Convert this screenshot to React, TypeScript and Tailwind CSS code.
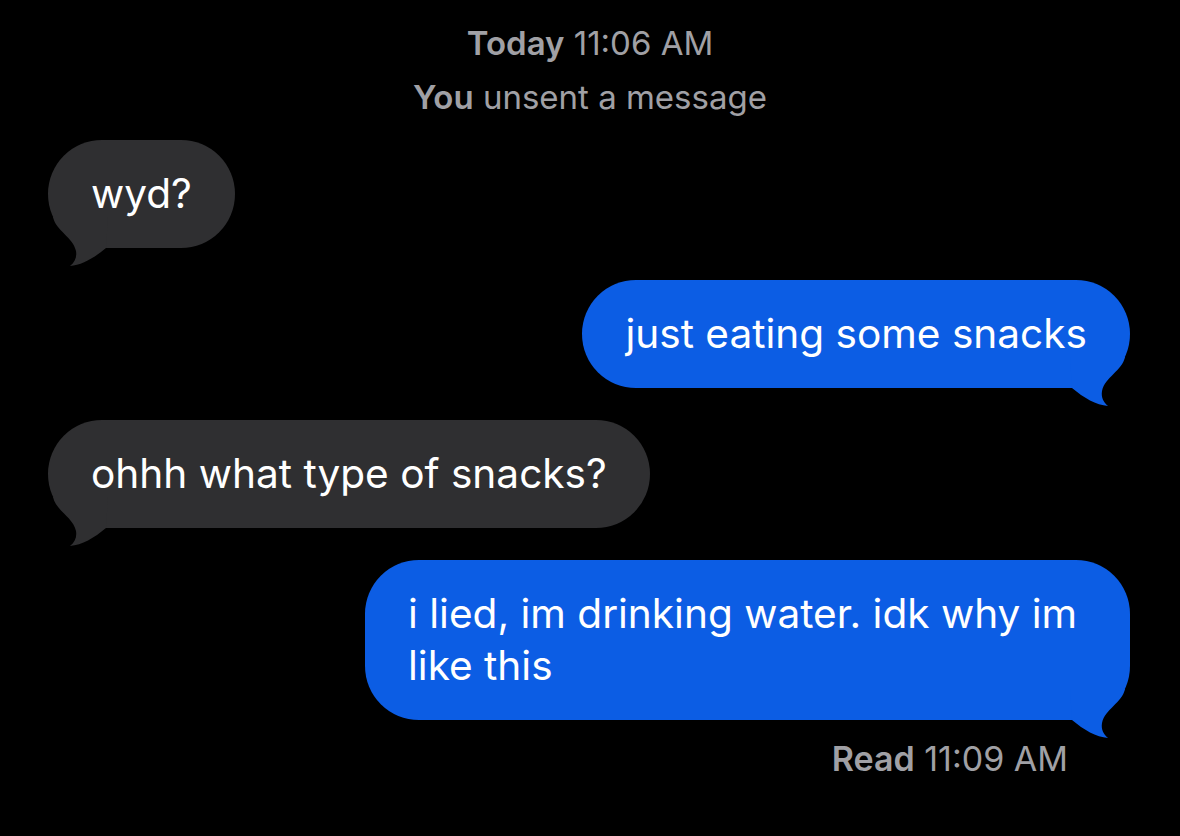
import React from 'react';

type Msg = { from: 'them' | 'me'; text: string };

const messages: Msg[] = [
  { from: 'them', text: 'wyd?' },
  { from: 'me', text: 'just eating some snacks' },
  { from: 'them', text: 'ohhh what type of snacks?' },
  { from: 'me', text: 'i lied, im drinking water. idk why im like this' },
];

function Tail({ side, color }: { side: 'left' | 'right'; color: string }) {
  const pos = side === 'left' ? 'left-0' : 'right-0 -scale-x-100';
  return (
    <svg
      className={`absolute ${pos} bottom-[-19px] w-[60px] h-[50px]`}
      viewBox="0 0 60 50"
      fill={color}
    >
      <path d="M5 0 C8 14 25 20 28 34 C29 40 27 45 22 49 C34 48 46 41 58 31 L60 0 Z" />
    </svg>
  );
}

function Bubble({ msg }: { msg: Msg }) {
  const mine = msg.from === 'me';
  const color = mine ? '#0c5de4' : '#2f2f31';
  return (
    <div className={`flex ${mine ? 'justify-end pr-[50px]' : 'justify-start pl-[48px]'}`}>
      <div
        className={`relative max-w-[765px] rounded-[54px] px-[43px] py-[28px] text-[40.6px] leading-[52px] text-white ${
          mine ? 'bg-[#0c5de4]' : 'bg-[#2f2f31]'
        }`}
      >
        <Tail side={mine ? 'right' : 'left'} color={color} />
        <span className="relative">{msg.text}</span>
      </div>
    </div>
  );
}

export default function App() {
  return (
    <div
      className="w-[1180px] h-[836px] bg-black overflow-hidden"
      style={{ fontFamily: 'Inter, "Liberation Sans", sans-serif' }}
    >
      <div className="pt-[24px] flex flex-col items-center text-[33px] leading-[38px] text-[#a0a0a5]">
        <div>
          <span className="font-semibold">Today</span> 11:06 AM
        </div>
        <div className="mt-[16px]">
          <span className="font-semibold">You</span> unsent a message
        </div>
      </div>

      <div className="mt-[24px] flex flex-col gap-[32px]">
        {messages.map((m, i) => (
          <Bubble key={i} msg={m} />
        ))}
      </div>

      <div className="mt-[20px] pr-[112px] flex justify-end text-[34px] leading-[38px] text-[#a0a0a5]">
        <span>
          <span className="font-semibold">Read</span> 11:09 AM
        </span>
      </div>
    </div>
  );
}
